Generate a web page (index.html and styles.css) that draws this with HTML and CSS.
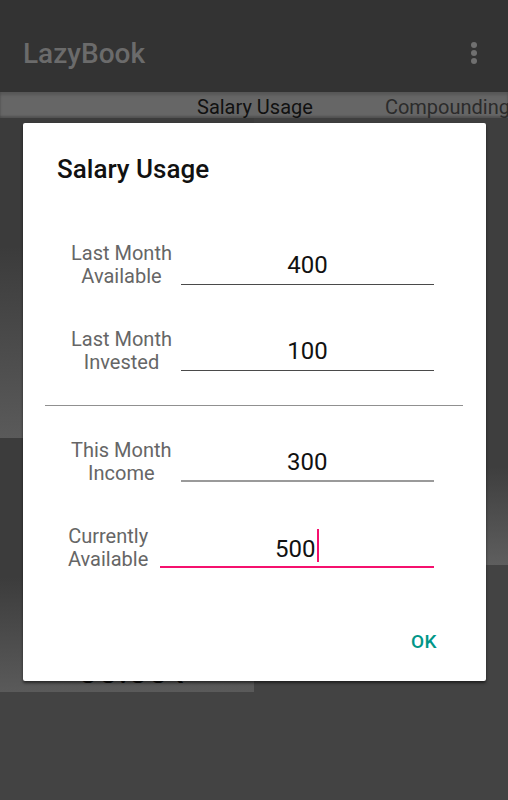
FILE: index.html
```html
<!DOCTYPE html>
<html>
<head>
    <title>LazyBook</title>
    <link rel="stylesheet" href="styles.css">
</head>
<body>
    <div id="screen">
        <div id="appbar">
            <span class="app-title">LazyBook</span>
            <svg class="menu-dots" width="8" height="24" viewBox="0 0 8 24">
                <circle cx="4" cy="4" r="3"></circle>
                <circle cx="4" cy="12" r="3"></circle>
                <circle cx="4" cy="20" r="3"></circle>
            </svg>
        </div>

        <div id="tabs">
            <span class="tab tab-active">Salary Usage</span>
            <span class="tab">Compounding</span>
        </div>

        <div id="cards">
            <div class="card card-summary"></div>
            <div class="card card-side"></div>
            <div class="card card-total">
                <span class="total-value">00.00₹</span>
            </div>
        </div>
    </div>

    <!-- Salary usage dialog, shown over the main screen -->
    <div class="dialog">
        <h2 class="dialog-title">Salary Usage</h2>

        <div class="form-row form-row-first">
            <span class="field-label">Last Month<br>Available</span>
            <div class="field"><span>400</span></div>
        </div>

        <div class="form-row">
            <span class="field-label">Last Month<br>Invested</span>
            <div class="field"><span>100</span></div>
        </div>

        <div class="divider"></div>

        <div class="form-row">
            <span class="field-label">This Month<br>Income</span>
            <div class="field field-light"><span>300</span></div>
        </div>

        <div class="form-row form-row-focus">
            <span class="field-label">Currently<br>Available</span>
            <div class="field field-focus"><span>500<span class="caret"></span></span></div>
        </div>

        <div class="dialog-actions">
            <button type="button" class="btn-ok">OK</button>
        </div>
    </div>
</body>
</html>
```

FILE: styles.css
```css
body {
    margin: 0;
    padding: 0;
    font-family: Roboto, "Noto Sans", Arial, sans-serif;
    background-color: #434343;
}

#screen {
    width: 508px;
    height: 800px;
    overflow: hidden;
}

#appbar {
    height: 92px;
    box-sizing: border-box;
    background-color: #333;
    display: flex;
    justify-content: space-between;
    align-items: flex-start;
    padding: 0 30px 0 23px;
}

.app-title {
    margin-top: 37px;
    font-size: 28px;
    font-weight: 500;
    color: #6b6b6b;
}

.menu-dots {
    margin-top: 41px;
    fill: #707070;
}

#tabs {
    height: 26px;
    box-sizing: border-box;
    background-color: #666;
    box-shadow: inset 0 3px 3px rgba(0, 0, 0, 0.15), inset 0 -2px 2px rgba(0, 0, 0, 0.2);
    display: flex;
    gap: 72px;
    padding: 3px 0 0 197px;
    overflow: hidden;
    white-space: nowrap;
}

.tab {
    font-size: 20px;
    color: #2b2b2b;
}

.tab-active {
    color: #111;
}

#cards {
    display: grid;
    grid-template-columns: 254px 254px;
    grid-template-rows: 320px 127px 127px;
}

.card-summary {
    grid-column: 1;
    grid-row: 1;
    background: linear-gradient(#3b3b3b 40%, #5a5a5a);
}

.card-side {
    grid-column: 2;
    grid-row: 1 / 3;
    background: linear-gradient(#3e3e3e 78%, #5e5e5e);
}

.card-total {
    grid-column: 1;
    grid-row: 2 / 4;
    background: linear-gradient(#3c3c3c 55%, #5a5a5a);
    display: flex;
    align-items: flex-end;
    padding: 0 0 3px 78px;
}

.total-value {
    font-size: 36px;
    line-height: 1;
    color: #0a0a0a;
}

.dialog {
    position: absolute;
    left: 23px;
    top: 123px;
    width: 463px;
    background-color: #fff;
    border-radius: 2px;
    box-shadow: 0 2px 3px rgba(0, 0, 0, 0.55);
}

.dialog-title {
    margin: 0;
    padding: 30px 34px 0;
    font-size: 26px;
    line-height: 32px;
    font-weight: 500;
    color: #111;
}

.form-row {
    display: flex;
    align-items: center;
    gap: 9px;
    padding: 0 52px 0 48px;
    margin-top: 40px;
}

.form-row-first {
    margin-top: 57px;
}

.form-row-focus {
    padding-left: 45px;
    gap: 12px;
}

.field-label {
    flex: none;
    font-size: 20px;
    line-height: 23px;
    color: #666;
    text-align: center;
}

.field {
    flex: 1;
    height: 40px;
    box-sizing: border-box;
    border-bottom: 1px solid #4a4a4a;
    display: flex;
    justify-content: center;
    align-items: flex-end;
    padding-bottom: 5px;
    font-size: 24px;
    line-height: 28px;
    color: #111;
}

.field-light {
    border-bottom: 2px solid #9a9a9a;
    padding-bottom: 4px;
}

.field-focus {
    border-bottom: 2px solid #f5106e;
    padding-bottom: 3px;
}

.caret {
    display: inline-block;
    width: 2px;
    height: 33px;
    margin-left: 2px;
    vertical-align: -5px;
    background-color: #f5106e;
}

.divider {
    height: 1px;
    margin: 31px 23px 0 22px;
    background-color: #909090;
}

.form-row + .divider + .form-row {
    margin-top: 33px;
}

.dialog-actions {
    display: flex;
    justify-content: flex-end;
    padding: 60px 49px 28px 0;
}

.btn-ok {
    padding: 0;
    border: none;
    background: none;
    font-family: inherit;
    font-size: 19px;
    line-height: 22px;
    font-weight: 500;
    letter-spacing: 0.5px;
    color: #009688;
    cursor: pointer;
}
```
